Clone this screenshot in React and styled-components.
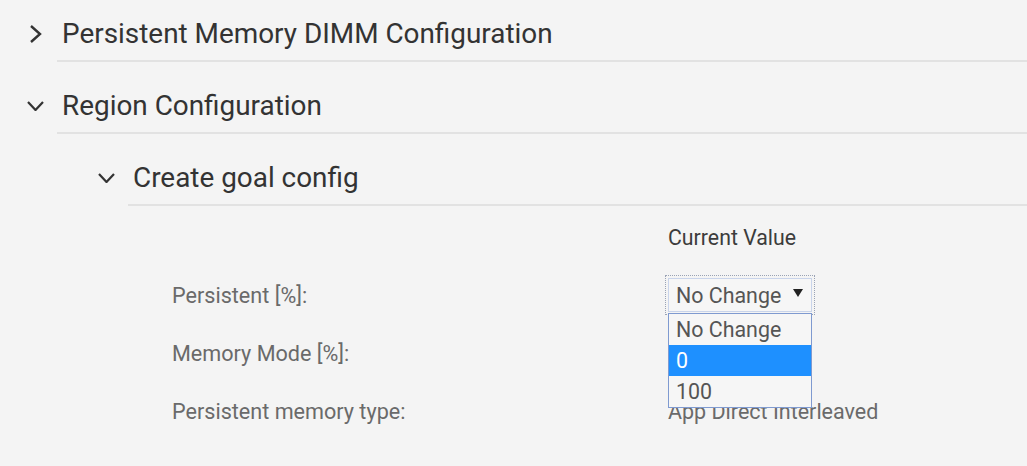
import React from 'react'
import styled, { createGlobalStyle } from 'styled-components'

const GlobalStyle = createGlobalStyle`
body {
    margin: 0;
    background: #f4f4f4;
    font-family: Roboto, "Liberation Sans", sans-serif;
}
`

const Page = styled.div`
width: 1027px;
height: 466px;
overflow: hidden;
background: #f4f4f4;
`

const Header = styled.div`
display: flex;
margin-left: ${p => p.indent}px;
margin-top: ${p => (p.first ? -10 : 0)}px;
`

const IconCell = styled.div`
width: 57px;
flex: none;
display: flex;
align-items: center;
justify-content: center;
padding: 28px 0 12px 14px;
box-sizing: border-box;
height: 72px;
color: #333;
`

const Title = styled.div`
flex: 1;
height: 72px;
box-sizing: border-box;
padding: 28px 0 10px 5px;
border-bottom: 2px solid #e2e2e2;
font-size: 27.9px;
line-height: 32px;
color: #333;
`

const Fields = styled.div`
display: grid;
grid-template-columns: 496px 1fr;
grid-auto-rows: 58px;
padding-left: 172px;
padding-top: 2px;
align-items: center;
`

const ColHead = styled.div`
grid-column: 2;
font-size: 21.3px;
color: #3c3c3c;
`

const Label = styled.div`
font-size: 21.6px;
color: #6a6a6a;
`

const Value = styled.div`
font-size: 21.5px;
color: #6a6a6a;
`

const SelectWrap = styled.div`
position: relative;
width: 144px;
`

const SelectBox = styled.div`
display: flex;
align-items: center;
justify-content: space-between;
height: 34px;
box-sizing: border-box;
padding: 0 8px 0 7px;
border: 1px solid #c9d4ea;
background: #f6f6f6;
font-size: 21.4px;
color: #555;
outline: 1px dotted #9aa3b5;
outline-offset: 2px;
`

const Arrow = styled.span`
width: 0;
height: 0;
border-left: 5px solid transparent;
border-right: 5px solid transparent;
border-top: 8px solid #222;
margin-top: -4px;
`

const List = styled.div`
position: absolute;
left: 0;
top: 35px;
width: 144px;
box-sizing: border-box;
border: 1px solid #7f9ad0;
background: #f6f6f6;
z-index: 2;
`

const Option = styled.div`
height: 31px;
line-height: 31px;
padding-left: 7px;
font-size: 21.4px;
color: ${p => (p.active ? '#fff' : '#555')};
background: ${p => (p.active ? '#1e90ff' : 'transparent')};
`

const ChevronRight = () => (
    <svg width="14" height="20" viewBox="0 0 14 20">
        <polyline points="2,2 11,10 2,18" fill="none" stroke="#333" strokeWidth="2.4" />
    </svg>
)

const ChevronDown = () => (
    <svg width="17" height="10" viewBox="0 0 17 10">
        <polyline points="1,1 8.5,9 16,1" fill="none" stroke="#333" strokeWidth="2.2" />
    </svg>
)

const App = () => {
    return (
        <Page>
            <GlobalStyle />
            <Header indent={0} first>
                <IconCell><ChevronRight /></IconCell>
                <Title>Persistent Memory DIMM Configuration</Title>
            </Header>
            <Header indent={0}>
                <IconCell><ChevronDown /></IconCell>
                <Title>Region Configuration</Title>
            </Header>
            <Header indent={71}>
                <IconCell><ChevronDown /></IconCell>
                <Title>Create goal config</Title>
            </Header>
            <Fields>
                <ColHead>Current Value</ColHead>
                <Label>Persistent [%]:</Label>
                <SelectWrap>
                    <SelectBox>
                        No Change
                        <Arrow />
                    </SelectBox>
                    <List>
                        <Option>No Change</Option>
                        <Option active>0</Option>
                        <Option>100</Option>
                    </List>
                </SelectWrap>
                <Label>Memory Mode [%]:</Label>
                <Value></Value>
                <Label>Persistent memory type:</Label>
                <Value>App Direct Interleaved</Value>
            </Fields>
        </Page>
    )
}

export default App
